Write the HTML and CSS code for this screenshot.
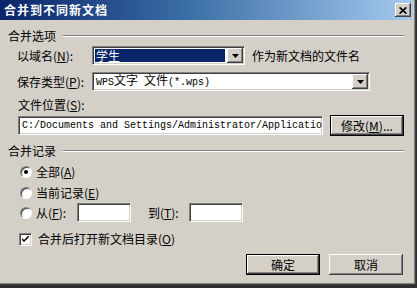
FILE: index.html
```html
<!DOCTYPE html>
<html lang="zh-CN">
<head>
<meta charset="utf-8">
<title>合并到不同新文档</title>
<link rel="stylesheet" href="styles.css">
</head>
<body>
<div class="window">
  <div class="titlebar">
    <span class="title">合并到不同新文档</span>
    <span class="close"><svg width="8" height="7" viewBox="0 0 8 7"><path d="M0.6 0.4 L7.4 6.6 M7.4 0.4 L0.6 6.6" stroke="#000" stroke-width="1.7" fill="none"/></svg></span>
  </div>
  <div class="content">
    <div class="group-head"><span>合并选项</span><span class="etch"></span></div>

    <div class="row r-combo1">
      <span class="label">以域名(<u>N</u>):</span>
      <div class="sunken combo combo1">
        <div class="combo-val selected"><span>学生</span></div>
        <span class="drop raised"><svg width="7" height="4" viewBox="0 0 7 4"><polygon points="0,0 7,0 3.5,4" fill="#000"/></svg></span>
      </div>
      <span class="hint">作为新文档的文件名</span>
    </div>

    <div class="row r-combo2">
      <span class="label">保存类型(<u>P</u>):</span>
      <div class="sunken combo combo2">
        <div class="combo-val"><span class="mono">WPS<span class="cjk">文字</span> <span class="cjk">文件</span>(*.wps)</span></div>
        <span class="drop raised"><svg width="7" height="4" viewBox="0 0 7 4"><polygon points="0,0 7,0 3.5,4" fill="#000"/></svg></span>
      </div>
    </div>

    <div class="row r-label">
      <span>文件位置(<u>S</u>):</span>
    </div>

    <div class="row r-path">
      <div class="sunken field path"><span class="mono">C:/Documents and Settings/Administrator/Applicatio</span></div>
      <button class="btn default btn-modify">修改(<u>M</u>)...</button>
    </div>

    <div class="group-head g2"><span>合并记录</span><span class="etch"></span></div>

    <div class="row r-radio1">
      <span class="radio checked"></span><span>全部(<u>A</u>)</span>
    </div>
    <div class="row r-radio2">
      <span class="radio"></span><span>当前记录(<u>E</u>)</span>
    </div>
    <div class="row r-radio3">
      <span class="radio"></span><span class="from-label">从(<u>F</u>):</span>
      <div class="sunken field small"></div>
      <span class="to-label">到(<u>T</u>):</span>
      <div class="sunken field small"></div>
    </div>
    <div class="row r-check">
      <span class="check"><svg width="7" height="7" viewBox="0 0 7 7"><path d="M0 2 L0 4 L2 6 L7 1 L7 -1 L2 4 Z" fill="#000"/></svg></span><span>合并后打开新文档目录(<u>O</u>)</span>
    </div>

    <div class="row r-buttons">
      <button class="btn default">确定</button>
      <button class="btn">取消</button>
    </div>
  </div>
</div>
</body>
</html>
```

FILE: styles.css
```css
* { box-sizing: border-box; }
html, body { margin: 0; padding: 0; }
body {
  width: 417px;
  height: 288px;
  overflow: hidden;
  background: #303030;
  font-family: "Noto Sans CJK SC", sans-serif;
  font-size: 12px;
  line-height: 14px;
  color: #000;
}
u { text-decoration: underline; text-underline-offset: 1px; }

.window {
  width: 416px;
  height: 285px;
  background: #d4d0c8;
  box-shadow: inset -1px -1px #404040, inset -2px -2px #808080;
  display: flex;
  flex-direction: column;
}

.titlebar {
  height: 20px;
  margin-right: 3px;
  background: linear-gradient(to right, #0a246a 0%, #3a6ea5 45%, #a6caf0 100%);
  display: flex;
  align-items: center;
  justify-content: space-between;
  padding: 0 2px 0 4px;
}
.title {
  color: #fff;
  font-weight: bold;
  font-size: 12px;
  letter-spacing: 1px;
}
.close {
  width: 16px;
  height: 14px;
  background: #d4d0c8;
  box-shadow: inset -1px -1px #404040, inset 1px 1px #fff, inset -2px -2px #808080;
  display: flex;
  align-items: center;
  justify-content: center;
}

.content {
  padding: 10px 12px 0 8px;
  display: flex;
  flex-direction: column;
}

.group-head {
  height: 12px;
  display: flex;
  align-items: center;
  line-height: 12px;
}
.group-head.g2 { margin-top: 9px; }
.etch {
  flex: 1;
  height: 2px;
  margin-left: 7px;
  border-top: 1px solid #808080;
  border-bottom: 1px solid #fff;
}

.row {
  display: flex;
  align-items: center;
  padding-left: 9px;
}
.label { width: 75px; flex: none; }

.r-combo1 { margin-top: 4px; height: 19px; }
.r-combo2 { margin-top: 7px; height: 19px; }
.r-label { margin-top: 8px; height: 12px; padding-left: 10px; }
.r-path { margin-top: 4px; height: 21px; padding-left: 10px; }
.r-radio1 { margin-top: 8px; height: 14px; padding-left: 12px; }
.r-radio2 { margin-top: 7px; height: 14px; padding-left: 12px; }
.r-radio3 { margin-top: 3px; height: 19px; padding-left: 12px; }
.r-check { margin-top: 10px; height: 14px; padding-left: 11px; }
.r-buttons { margin-top: 8px; height: 21px; justify-content: flex-end; gap: 9px; padding-right: 1px; }

.sunken {
  background: #fff;
  border: 1px solid;
  border-color: #808080 #fff #fff #808080;
  box-shadow: inset 1px 1px #404040, inset -1px -1px #d4d0c8;
}
.raised {
  background: #d4d0c8;
  box-shadow: inset -1px -1px #404040, inset 1px 1px #fff, inset -2px -2px #808080;
}

.combo {
  height: 19px;
  display: flex;
  align-items: stretch;
  padding: 1px;
}
.combo1 { width: 153px; }
.combo2 { width: 278px; }
.combo-val {
  flex: 1;
  display: flex;
  align-items: center;
  padding-left: 2px;
  white-space: pre;
}
.combo-val.selected {
  background: #0a246a;
  color: #fff;
  margin: 1px 2px 1px 1px;
  padding-left: 1px;
}
.drop {
  width: 16px;
  flex: none;
  display: flex;
  align-items: center;
  justify-content: center;
}
.hint { margin-left: 7px; }

.mono {
  font-family: "Liberation Mono", "Noto Sans CJK SC", monospace;
  font-size: 10px;
  white-space: pre;
}
.cjk {
  font-family: "Noto Sans CJK SC", sans-serif;
  font-size: 12px;
}

.field {
  height: 19px;
  display: flex;
  align-items: center;
  padding-left: 3px;
  white-space: nowrap;
}
.path { width: 305px; }
.small { width: 54px; }

.btn {
  font-family: "Noto Sans CJK SC", sans-serif;
  font-size: 12px;
  line-height: 14px;
  color: #000;
  width: 74px;
  height: 21px;
  padding: 0;
  border: none;
  background: #d4d0c8;
  box-shadow: inset -1px -1px #404040, inset 1px 1px #fff, inset -2px -2px #808080;
}
.btn.default {
  border: 1px solid #000;
}
.btn-modify { margin-left: 7px; }

.radio {
  width: 12px;
  height: 12px;
  flex: none;
  border-radius: 50%;
  background: #fff;
  border: 1px solid;
  border-color: #808080 #fff #fff #808080;
  box-shadow: inset 1px 1px #404040;
  margin-right: 4px;
  display: flex;
  align-items: center;
  justify-content: center;
}
.radio.checked::after {
  content: "";
  width: 4px;
  height: 4px;
  border-radius: 50%;
  background: #000;
}
.from-label { width: 41px; flex: none; }
.to-label { margin-left: 17px; width: 41px; flex: none; }

.check {
  width: 13px;
  height: 13px;
  flex: none;
  background: #fff;
  border: 1px solid;
  border-color: #808080 #fff #fff #808080;
  box-shadow: inset 1px 1px #404040, inset -1px -1px #d4d0c8;
  margin-right: 6px;
  display: flex;
  align-items: center;
  justify-content: center;
}
```
